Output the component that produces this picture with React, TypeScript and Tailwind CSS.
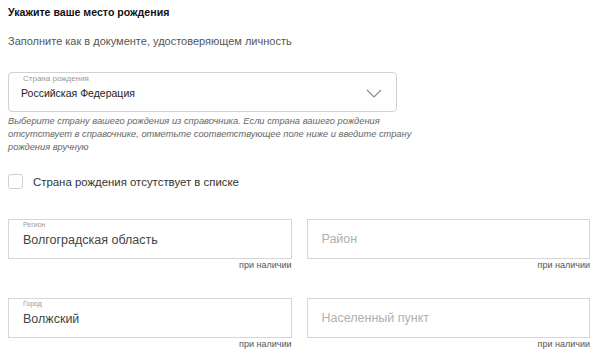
import React from 'react';

function Field({ label, value, placeholder }: { label?: string; value?: string; placeholder?: string }) {
  return (
    <div className="flex flex-col">
      {label ? (
        <div className="h-[40px] border border-[#d6d6d6] px-[14px] pt-[1px] flex flex-col">
          <span className="text-[7px] leading-[8px] text-[#9a9a9a]">{label}</span>
          <span className="text-[12.5px] leading-[16px] text-[#444] mt-[3px]">{value}</span>
        </div>
      ) : (
        <div className="h-[40px] border border-[#d6d6d6] px-[14px] flex items-center">
          <span className="text-[12.5px] leading-[16px] text-[#b0b0b0] -mt-[1px]">{placeholder}</span>
        </div>
      )}
      <span className="self-end text-[9px] leading-[12px] text-[#555]">при наличии</span>
    </div>
  );
}

export default function App() {
  return (
    <div className="w-[600px] h-[357px] bg-white pl-[8px] pr-[10px] overflow-hidden" style={{ fontFamily: '"Liberation Sans", Arial, sans-serif' }}>
      <div className="pt-[5px] text-[10.6px] leading-[14px] font-bold text-[#111]">Укажите ваше место рождения</div>
      <div className="mt-[15px] text-[11px] leading-[14px] text-[#555]">Заполните как в документе, удостоверяющем личность</div>

      <div className="mt-[24px] w-[389px] h-[40px] border border-[#d2d2d2] rounded-[4px] flex pl-[12px] pr-[14px]">
        <div className="flex-1 flex flex-col pt-[1px]">
          <span className="text-[8px] leading-[9px] text-[#999] pl-[2px]">Страна рождения</span>
          <span className="text-[10.5px] leading-[14px] text-[#222] mt-[3px]">Российская Федерация</span>
        </div>
        <svg width="16" height="9" viewBox="0 0 16 9" className="self-center mt-[2px]">
          <path d="M1 1l7 7 7-7" fill="none" stroke="#8a8a8a" strokeWidth="1.1" />
        </svg>
      </div>

      <div className="mt-[3px] whitespace-nowrap text-[9.3px] leading-[13px] italic text-[#666]">
        Выберите страну вашего рождения из справочника. Если страна вашего рождения
        <br />
        отсутствует в справочнике, отметьте соответствующее поле ниже и введите страну
        <br />
        рождения вручную
      </div>

      <label className="mt-[20px] flex items-center gap-[10px]">
        <span className="w-[15px] h-[15px] border border-[#cfcfcf] rounded-[3px] bg-white" />
        <span className="text-[11.4px] leading-[14px] text-[#333]">Страна рождения отсутствует в списке</span>
      </label>

      <div className="mt-[30px] grid grid-cols-2 gap-x-[15px] gap-y-[27px]">
        <Field label="Регион" value="Волгоградская область" />
        <Field placeholder="Район" />
        <Field label="Город" value="Волжский" />
        <Field placeholder="Населенный пункт" />
      </div>
    </div>
  );
}
